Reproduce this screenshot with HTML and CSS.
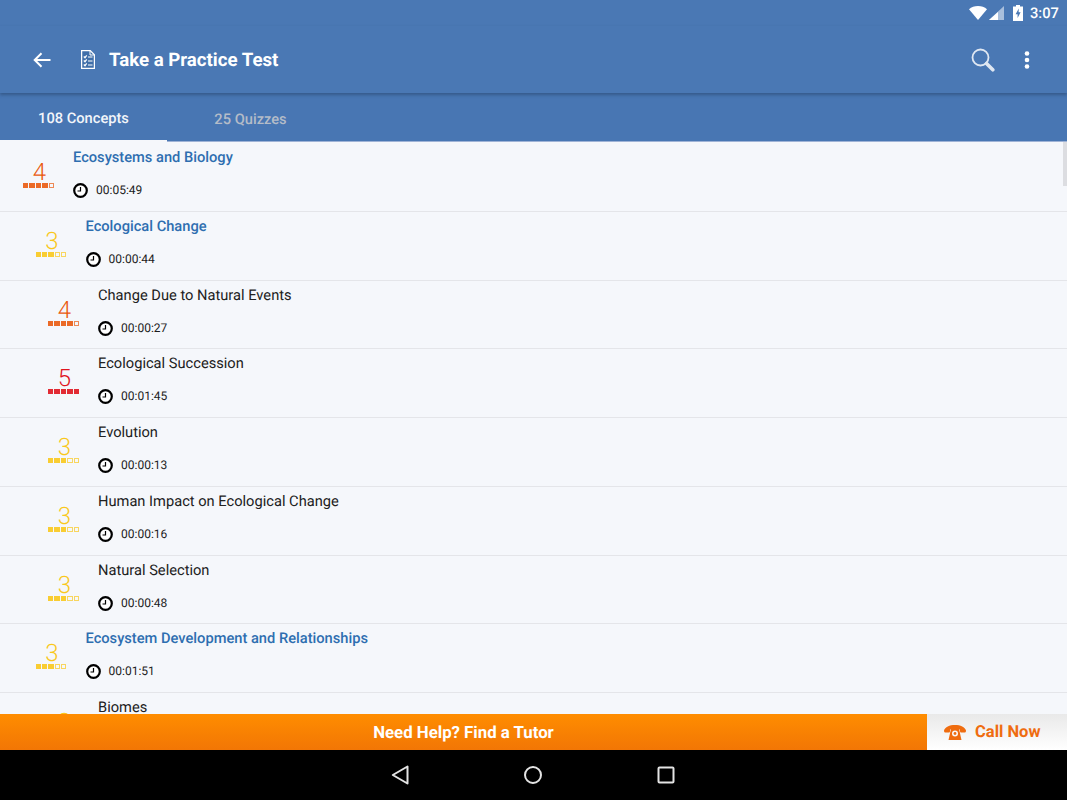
FILE: index.html
```html
<!DOCTYPE html>
<html lang="en">
<head>
<meta charset="utf-8">
<title>Take a Practice Test</title>
<link rel="stylesheet" href="styles.css">
</head>
<body>
<div class="app">
  <div class="statusbar">
    <svg class="st-wifi" width="18" height="14" viewBox="0 0 18 14"><path d="M0 3.200C2.400 1.200 5.500 0 9 0s6.600 1.200 9 3.200L9 14z" fill="#fff"/></svg>
    <svg class="st-signal" width="15" height="14" viewBox="0 0 15 14"><path d="M15 0v14H0z" fill="#a9bfdc"/><path d="M9 6v8H0z" fill="#fff"/></svg>
    <svg class="st-batt" width="10" height="16" viewBox="0 0 10 16"><path d="M3 0h4v1.500h3V16H0V1.500h3z" fill="#fff"/><path d="M5.800 3.500 2.600 9.200h2v3.800l3-5.800h-2z" fill="#4a78b4"/></svg>
    <span class="st-time">3:07</span>
  </div>
  <div class="toolbar">
    <svg class="tb-back" width="18" height="16" viewBox="0 0 18 16"><path d="M17.500 8H2M8.500 1.200 1.700 8l6.800 6.800" fill="none" stroke="#fff" stroke-width="2"/></svg>
    <svg class="tb-doc" width="14" height="19" viewBox="0 0 14 19"><path d="M.6.600h8.600l4.200 4.200v13.600H.6z" fill="#3f6ea9" stroke="#fff" stroke-width="1.300"/><path d="M9 1v4h4" fill="none" stroke="#fff"/><path d="M2.800 6.500l1.200 1.200 1.700-2.400M2.800 10.500l1.200 1.200 1.700-2.400M2.800 14.500l1.200 1.200 1.700-2.400M7 7h4.500M7 11h4.500M7 15h4.500" fill="none" stroke="#fff" stroke-width="1.200"/></svg>
    <h1 class="tb-title">Take a Practice Test</h1>
    <svg class="tb-search" width="24" height="24" viewBox="0 0 24 24"><circle cx="9.500" cy="9.500" r="8" fill="none" stroke="#dfe7f2" stroke-width="1.800"/><path d="M15.500 15.500l6.300 6.300" stroke="#dfe7f2" stroke-width="3.600" stroke-linecap="round"/></svg>
    <svg class="tb-more" width="6" height="18" viewBox="0 0 6 18"><circle cx="3" cy="2.500" r="2.300" fill="#fff"/><circle cx="3" cy="9" r="2.300" fill="#fff"/><circle cx="3" cy="15.500" r="2.300" fill="#fff"/></svg>
  </div>
  <div class="tabs">
    <div class="tab tab-active">108 Concepts</div>
    <div class="tab">25 Quizzes</div>
  </div>
  <div class="list">
    <div class="row lvl0 head"><div class="score s4"><span class="num">4</span><span class="sq"><i></i><i></i><i></i><i></i><i class="off"></i></span></div><div class="info"><div class="name">Ecosystems and Biology</div><div class="time"><svg class="clock" viewBox="0 0 15 15"><circle cx="7.500" cy="7.500" r="6.300" fill="#fff" stroke="#000" stroke-width="2.200"/><path d="M7.500 4v4H4.500" fill="none" stroke="#000" stroke-width="1.200"/></svg>00:05:49</div></div></div>
    <div class="row lvl1 head"><div class="score s3"><span class="num">3</span><span class="sq"><i></i><i></i><i></i><i class="off"></i><i class="off"></i></span></div><div class="info"><div class="name">Ecological Change</div><div class="time"><svg class="clock" viewBox="0 0 15 15"><circle cx="7.500" cy="7.500" r="6.300" fill="#fff" stroke="#000" stroke-width="2.200"/><path d="M7.500 4v4H4.500" fill="none" stroke="#000" stroke-width="1.200"/></svg>00:00:44</div></div></div>
    <div class="row lvl2"><div class="score s4"><span class="num">4</span><span class="sq"><i></i><i></i><i></i><i></i><i class="off"></i></span></div><div class="info"><div class="name">Change Due to Natural Events</div><div class="time"><svg class="clock" viewBox="0 0 15 15"><circle cx="7.500" cy="7.500" r="6.300" fill="#fff" stroke="#000" stroke-width="2.200"/><path d="M7.500 4v4H4.500" fill="none" stroke="#000" stroke-width="1.200"/></svg>00:00:27</div></div></div>
    <div class="row lvl2"><div class="score s5"><span class="num">5</span><span class="sq"><i></i><i></i><i></i><i></i><i></i></span></div><div class="info"><div class="name">Ecological Succession</div><div class="time"><svg class="clock" viewBox="0 0 15 15"><circle cx="7.500" cy="7.500" r="6.300" fill="#fff" stroke="#000" stroke-width="2.200"/><path d="M7.500 4v4H4.500" fill="none" stroke="#000" stroke-width="1.200"/></svg>00:01:45</div></div></div>
    <div class="row lvl2"><div class="score s3"><span class="num">3</span><span class="sq"><i></i><i></i><i></i><i class="off"></i><i class="off"></i></span></div><div class="info"><div class="name">Evolution</div><div class="time"><svg class="clock" viewBox="0 0 15 15"><circle cx="7.500" cy="7.500" r="6.300" fill="#fff" stroke="#000" stroke-width="2.200"/><path d="M7.500 4v4H4.500" fill="none" stroke="#000" stroke-width="1.200"/></svg>00:00:13</div></div></div>
    <div class="row lvl2"><div class="score s3"><span class="num">3</span><span class="sq"><i></i><i></i><i></i><i class="off"></i><i class="off"></i></span></div><div class="info"><div class="name">Human Impact on Ecological Change</div><div class="time"><svg class="clock" viewBox="0 0 15 15"><circle cx="7.500" cy="7.500" r="6.300" fill="#fff" stroke="#000" stroke-width="2.200"/><path d="M7.500 4v4H4.500" fill="none" stroke="#000" stroke-width="1.200"/></svg>00:00:16</div></div></div>
    <div class="row lvl2"><div class="score s3"><span class="num">3</span><span class="sq"><i></i><i></i><i></i><i class="off"></i><i class="off"></i></span></div><div class="info"><div class="name">Natural Selection</div><div class="time"><svg class="clock" viewBox="0 0 15 15"><circle cx="7.500" cy="7.500" r="6.300" fill="#fff" stroke="#000" stroke-width="2.200"/><path d="M7.500 4v4H4.500" fill="none" stroke="#000" stroke-width="1.200"/></svg>00:00:48</div></div></div>
    <div class="row lvl1 head"><div class="score s3"><span class="num">3</span><span class="sq"><i></i><i></i><i></i><i class="off"></i><i class="off"></i></span></div><div class="info"><div class="name">Ecosystem Development and Relationships</div><div class="time"><svg class="clock" viewBox="0 0 15 15"><circle cx="7.500" cy="7.500" r="6.300" fill="#fff" stroke="#000" stroke-width="2.200"/><path d="M7.500 4v4H4.500" fill="none" stroke="#000" stroke-width="1.200"/></svg>00:01:51</div></div></div>
    <div class="row lvl2"><div class="score s3"><span class="num">3</span><span class="sq"><i></i><i></i><i></i><i class="off"></i><i class="off"></i></span></div><div class="info"><div class="name">Biomes</div></div></div>
    <div class="scrollthumb"></div>
  </div>
  <div class="cta">
    <div class="cta-help">Need Help? Find a Tutor</div>
    <div class="cta-call">
      <svg width="22" height="15" viewBox="0 0 22 15"><path d="M0 5.500C1 2 5.500 0 11 0s10 2 11 5.500c0 1.500-.5 2-1.500 2h-3c-1 0-1.500-.5-1.500-1.500V4.500H6V6c0 1-.5 1.500-1.500 1.500h-3C.5 7.500 0 7 0 5.500z" fill="#ef6c0f"/><path d="M7 4h8l2.500 11h-13z" fill="#ef6c0f"/><circle cx="11" cy="8.500" r="3" fill="#f8f8f8"/><circle cx="11" cy="8.500" r="1.400" fill="#ef6c0f"/></svg>
      <span>Call Now</span>
    </div>
  </div>
  <div class="navbar">
    <svg class="nav-ico" width="18" height="20" viewBox="0 0 18 20"><path d="M16.500 1.500v17L1.800 10z" fill="none" stroke="#e4e4e4" stroke-width="2" stroke-linejoin="round"/></svg>
    <svg class="nav-ico" width="18" height="18" viewBox="0 0 18 18"><circle cx="9" cy="9" r="8" fill="none" stroke="#e4e4e4" stroke-width="2"/></svg>
    <svg class="nav-ico" width="18" height="18" viewBox="0 0 18 18"><rect x="1.500" y="1.500" width="15" height="15" rx="1" fill="none" stroke="#e4e4e4" stroke-width="2"/></svg>
  </div>
</div>
</body>
</html>
```

FILE: styles.css
```css
* { box-sizing: border-box; }
html, body { margin: 0; padding: 0; }
body { font-family: Roboto, "Liberation Sans", sans-serif; background: #f5f7fb; text-rendering: geometricPrecision; }
.app { width: 1067px; height: 800px; display: flex; flex-direction: column; overflow: hidden; }

.statusbar { height: 26px; flex: none; background: #4a78b4; display: flex; align-items: center; padding-left: 969px; color: #fff; }
.st-signal { margin-left: 2px; }
.st-batt { margin-left: 9px; }
.st-time { margin-left: 7px; font-size: 14.67px; font-weight: 500; }

.toolbar { height: 67px; flex: none; background: #4a78b4; display: flex; align-items: center; position: relative; z-index: 1; box-shadow: 0 2px 3px rgba(40, 70, 110, .6); }
.tb-back { margin-left: 33px; }
.tb-doc { margin-left: 30px; }
.tb-title { margin: 1px 0 0 14px; font-size: 18.67px; font-weight: 700; color: #fff; flex: 1; }
.tb-search { margin-right: 29px; }
.tb-more { margin-right: 37px; }

.tabs { height: 49px; flex: none; background: #4876b3; display: flex; border-bottom: 1px solid #9fb3d6; }
.tab { width: 167px; font-size: 14.67px; font-weight: 500; color: #b4bcc8; display: flex; align-items: center; justify-content: center; padding-top: 3px; }
.tab-active { color: #f2f5fa; height: 49px; border-bottom: 2px solid #f5f7fb; }

.list { flex: 1; min-height: 0; overflow: hidden; position: relative; background: #f5f7fb; padding-top: 1px; }
.row { height: 68.75px; display: flex; border-bottom: 1px solid #e4e5e9; }
.lvl0 { padding-left: 23px; }
.lvl1 { padding-left: 35.5px; }
.lvl2 { padding-left: 48px; }

.score { width: 31px; margin-right: 19px; display: flex; flex-direction: column; align-items: center; padding-top: 17px; }
.num { font-size: 24px; font-weight: 300; line-height: 24px; margin-left: 2px; }
.sq { display: flex; gap: 1px; margin-top: -1px; }
.sq i { width: 5.4px; height: 5px; background: currentColor; opacity: .9; display: block; }
.sq i.off { background: transparent; border: 1px solid currentColor; opacity: .7; }
.s3 { color: #f9c81c; }
.s4 { color: #ea5a10; }
.s5 { color: #e0141e; }

.info { display: flex; flex-direction: column; }
.name { font-size: 14.67px; line-height: 20px; margin-top: 4px; color: #212121; }
.head .name { font-weight: 500; color: #2e6eb0; }
.time { display: flex; align-items: center; gap: 8px; font-size: 12px; line-height: 15px; color: #1c1c1c; margin-top: 16px; }
.clock { width: 15px; height: 15px; flex: none; }

.scrollthumb { position: absolute; right: 0; top: 0; width: 4px; height: 44px; background: #dcdde1; }

.cta { height: 36px; flex: none; display: flex; position: relative; }
.cta-help { flex: 1; background: linear-gradient(#ff8d00, #f27605); color: #fff; font-size: 16.8px; font-weight: 700; display: flex; align-items: center; justify-content: center; padding-top: 1px; }
.cta-call { width: 140px; background: linear-gradient(#e9e9e9, #ffffff); display: flex; align-items: center; padding: 1px 0 0 17px; gap: 9px; color: #ef6c0f; font-size: 16.5px; font-weight: 700; }

.navbar { height: 50px; flex: none; background: #000; display: flex; align-items: center; justify-content: center; gap: 115px; padding-right: 1px; }
```
